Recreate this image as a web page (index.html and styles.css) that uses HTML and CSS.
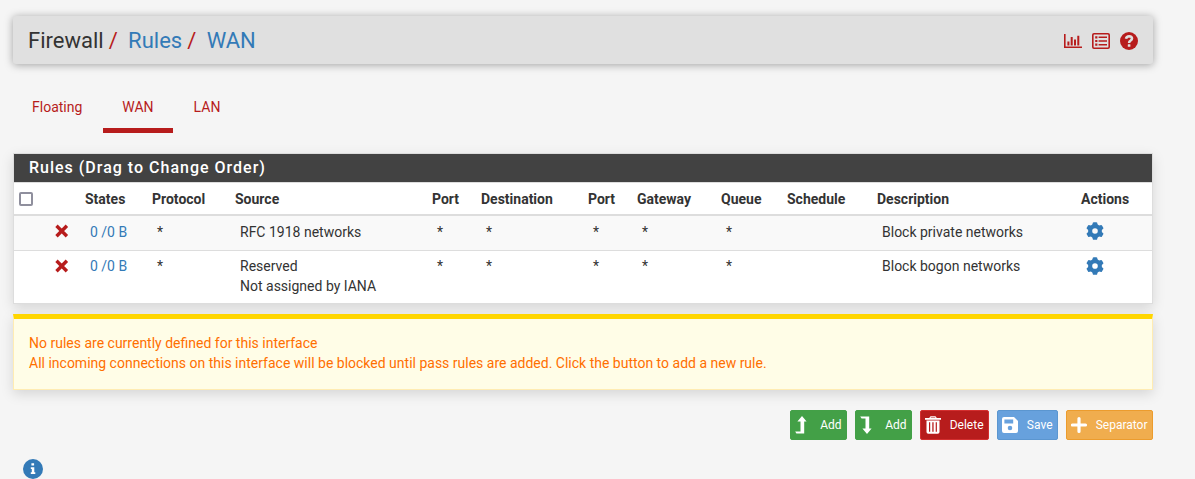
FILE: index.html
```html
<!DOCTYPE html>
<html lang="en">
<head>
<meta charset="utf-8">
<title>Firewall: Rules: WAN</title>
<link rel="stylesheet" href="styles.css">
</head>
<body>
<svg class="defs" width="0" height="0">
  <symbol id="times" viewBox="0 0 14 14"><path d="M2.7 3L10.7 11M10.7 3L2.7 11" stroke="currentColor" stroke-width="3.4" stroke-linecap="square"/></symbol>
  <symbol id="gear" viewBox="0 0 18 18"><g fill="currentColor"><path fill-rule="evenodd" d="M9 2.1a6.9 6.9 0 1 0 0 13.8a6.9 6.9 0 1 0 0-13.8zM9 6.2a2.8 2.8 0 1 1 0 5.6a2.8 2.8 0 1 1 0-5.6z"/><path id="tooth" d="M6 4.5L6.8 .8Q7 .2 7.7 .2H10.3Q11 .2 11.2 .8L12 4.5z"/><use href="#tooth" transform="rotate(60 9 9)"/><use href="#tooth" transform="rotate(120 9 9)"/><use href="#tooth" transform="rotate(180 9 9)"/><use href="#tooth" transform="rotate(240 9 9)"/><use href="#tooth" transform="rotate(300 9 9)"/></g></symbol>
</svg>
<header class="header">
  <ol class="breadcrumb">
    <li>Firewall</li>
    <li><a href="#">Rules</a></li>
    <li><a href="#">WAN</a></li>
  </ol>
  <div class="header-icons">
    <svg width="18" height="18" viewBox="0 0 18 18"><path fill="currentColor" d="M0 2h1.6v12.4H18V16H0zM3.4 9.5h2v4h-2zM6.7 5h2v8.5h-2zM10 7.5h2v6h-2zM13.3 3.8h2v9.7h-2z"/></svg>
    <svg width="18" height="18" viewBox="0 0 18 18"><rect x=".8" y="1.8" width="16.4" height="14.4" rx="1.2" fill="none" stroke="currentColor" stroke-width="1.6"/><path fill="currentColor" d="M3.2 4.2h2.2v2.2H3.2zM3.2 7.9h2.2v2.2H3.2zM3.2 11.6h2.2v2.2H3.2zM6.6 4.5H15v1.6H6.6zM6.6 8.2H15v1.6H6.6zM6.6 11.9H15v1.6H6.6z"/></svg>
    <svg width="18" height="18" viewBox="0 0 18 18"><circle cx="9" cy="9" r="9" fill="currentColor"/><path d="M6 6.8Q6.5 4.2 9.1 4.2Q12 4.3 12 6.6Q12 7.9 10.5 8.7Q9.1 9.4 9.1 11" fill="none" stroke="#e0e0e0" stroke-width="2.6"/><rect x="7.8" y="12.2" width="2.6" height="2.6" rx=".4" fill="#e0e0e0"/></svg>
  </div>
</header>
<nav class="tabs">
  <a href="#">Floating</a><a href="#" class="active">WAN</a><a href="#">LAN</a>
</nav>
<section class="panel">
  <h2>Rules (Drag to Change Order)</h2>
  <table>
    <colgroup><col class="c-check"><col class="c-icon"><col class="c-states"><col class="c-proto"><col class="c-source"><col class="c-port"><col class="c-dest"><col class="c-port"><col class="c-gateway"><col class="c-queue"><col class="c-schedule"><col class="c-desc"><col class="c-actions"></colgroup>
    <thead><tr><th><span class="check"></span></th><th></th><th>States</th><th>Protocol</th><th>Source</th><th>Port</th><th>Destination</th><th>Port</th><th>Gateway</th><th>Queue</th><th>Schedule</th><th>Description</th><th>Actions</th></tr></thead>
    <tbody>
      <tr class="private"><td></td><td class="block"><svg width="14" height="14"><use href="#times"/></svg></td><td><a href="#">0 /0 B</a></td><td>*</td><td>RFC 1918 networks</td><td>*</td><td>*</td><td>*</td><td>*</td><td>*</td><td></td><td>Block private networks</td><td class="edit"><svg width="18" height="18"><use href="#gear"/></svg></td></tr>
      <tr class="bogon"><td></td><td class="block"><svg width="14" height="14"><use href="#times"/></svg></td><td><a href="#">0 /0 B</a></td><td>*</td><td>Reserved<br>Not assigned by IANA</td><td>*</td><td>*</td><td>*</td><td>*</td><td>*</td><td></td><td>Block bogon networks</td><td class="edit"><svg width="18" height="18"><use href="#gear"/></svg></td></tr>
    </tbody>
  </table>
</section>
<div class="alert">No rules are currently defined for this interface<br>All incoming connections on this interface will be blocked until pass rules are added. Click the button to add a new rule.</div>
<div class="actions">
  <a class="btn add" href="#"><svg width="18" height="18" viewBox="0 0 18 18"><path fill="currentColor" d="M7 0L11.6 5.4H9.2V17.6H1.4L.2 15.4H5.5V5.4H2.4z"/></svg>Add</a>
  <a class="btn add" href="#"><svg width="18" height="18" viewBox="0 0 18 18"><path fill="currentColor" d="M7 18L11.6 12.6H9.2V.4H.2L1.6 2.6H5.5V12.6H2.4z"/></svg>Add</a>
  <a class="btn delete" href="#"><svg width="18" height="18" viewBox="0 0 18 18"><path fill="currentColor" fill-rule="evenodd" d="M0 2h4.2L5.5.3h5L11.8 2H16v1.7H0zM6 1.4l-.5.6h5l-.5-.6zM1.5 4.5h13V16q0 1.8-1.8 1.8H3.3Q1.5 17.8 1.5 16zM4 6.2v9.5h1.2V6.2zM7.3 6.2v9.5h1.3V6.2zM10.7 6.2v9.5h1.2V6.2z"/></svg>Delete</a>
  <a class="btn save" href="#"><svg width="18" height="18" viewBox="0 0 18 18"><path fill="currentColor" fill-rule="evenodd" d="M2 1h10l4 4v10q0 2-2 2H2q-2 0-2-2V3q0-2 2-2zM2.4 3.6v3.8h8.8V3.6zM8 9.7a2.3 2.3 0 1 0 0 4.6a2.3 2.3 0 1 0 0-4.6z"/></svg>Save</a>
  <a class="btn separator" href="#"><svg width="18" height="18" viewBox="0 0 18 18"><path d="M1.5 9h13M8 2.5v13" stroke="currentColor" stroke-width="3.2" stroke-linecap="round"/></svg>Separator</a>
</div>
<div class="info"><svg width="20" height="20" viewBox="0 0 20 20"><circle cx="10" cy="10" r="10" fill="currentColor"/><path fill="#fff" d="M8.4 4.3h2.7v2.3H8.4zM7.8 8.2h3.5v5h1v1.7H7.8v-1.7h1V9.9h-1z"/></svg></div>
</body>
</html>
```
FILE: styles.css
```css
* { box-sizing: border-box; }
body {
  margin: 0;
  padding: 16px 42px 0 13px;
  height: 479px;
  overflow: hidden;
  background: #f5f5f5;
  color: #333;
  font: 14px/20px Roboto, sans-serif;
}
a { color: #337ab7; text-decoration: none; }
svg { display: block; flex: none; }
.defs { position: absolute; }
.header {
  display: flex;
  align-items: center;
  justify-content: space-between;
  height: 48px;
  padding: 2px 15px 0;
  background: #e0e0e0;
  border-radius: 3px;
  box-shadow: 0 1px 8px rgba(0, 0, 0, .35);
}
.breadcrumb {
  display: flex;
  margin: 0;
  padding: 0;
  list-style: none;
  font-size: 22px;
  line-height: 30px;
}
.breadcrumb li + li::before { content: "/"; padding: 0 10.4px 0 5px; color: #b71c1c; }
.header-icons { display: flex; gap: 10px; color: #b71c1c; }
.tabs { display: flex; gap: 2px; height: 49px; margin: 20px 0; }
.tabs a { padding: 13px 19px 11px; color: #b71c1c; border-bottom: 5px solid transparent; }
.tabs .active { border-color: #b71c1c; }
.panel {
  height: 151px;
  background: #fff;
  border: 1px solid #ddd;
  box-shadow: 0 4px 12px rgba(0, 0, 0, .13);
}
.panel h2 {
  height: 28px;
  margin: 0;
  padding: 0 15px;
  background: #424242;
  color: #fff;
  font-size: 16px;
  font-weight: 500;
  line-height: 27px;
  letter-spacing: 1px;
}
table { width: 100%; table-layout: fixed; border-collapse: separate; border-spacing: 0; border-top: 1px solid #ddd; }
th, td { padding: 0; text-align: left; vertical-align: top; white-space: nowrap; }
th { height: 33px; padding: 6px 0 5px 5px; border-bottom: 2px solid #ddd; font-weight: 700; }
td { padding-left: 10px; }
.private td { height: 34px; padding-top: 6px; background: #f9f9f9; }
.bogon td { height: 53px; padding-top: 5px; border-top: 1px solid #ddd; }
.check { display: block; width: 14px; height: 14px; margin-top: 3px; border: 2px solid #8f8f9d; border-radius: 2px; }
.block { color: #b71c1c; }
td.block { padding-left: 1px; }
.block svg { margin-top: 2px; }
.bogon .block svg { margin-top: 3px; }
.edit { color: #337ab7; }
.bogon .edit svg { margin-top: 1px; }
.c-check { width: 40px; }
.c-icon { width: 26px; }
.c-states { width: 67px; }
.c-proto { width: 83px; }
.c-source { width: 197px; }
.c-port { width: 49px; }
.c-dest { width: 107px; }
.c-gateway { width: 84px; }
.c-queue { width: 66px; }
.c-schedule { width: 90px; }
.c-desc { width: 204px; }
.c-actions { width: 76px; }
.alert {
  height: 76px;
  margin-top: 10px;
  padding: 14px 15px;
  background: #fffde7;
  border: 1px solid #ffecb3;
  border-top: 5px solid #ffd600;
  color: #ff6f00;
  box-shadow: 0 4px 12px rgba(0, 0, 0, .13);
}
.actions { display: flex; justify-content: flex-end; gap: 8px; margin-top: 20px; }
.btn {
  display: flex;
  align-items: center;
  justify-content: space-between;
  height: 30px;
  padding: 0 4.5px 0 4px;
  border: 1px solid;
  border-radius: 2px;
  color: #fff;
  font-size: 12px;
}
.add { width: 57px; background: #43a047; border-color: #43a047; }
.delete { width: 69px; background: #b71c1c; border-color: #d32f2f; }
.save { width: 61px; background: #67a1dd; border-color: #5b96d0; }
.separator { width: 87px; background: #f0ad4e; border-color: #ec9c2d; }
.info { margin: 19px 0 0 10px; color: #337ab7; }
```
